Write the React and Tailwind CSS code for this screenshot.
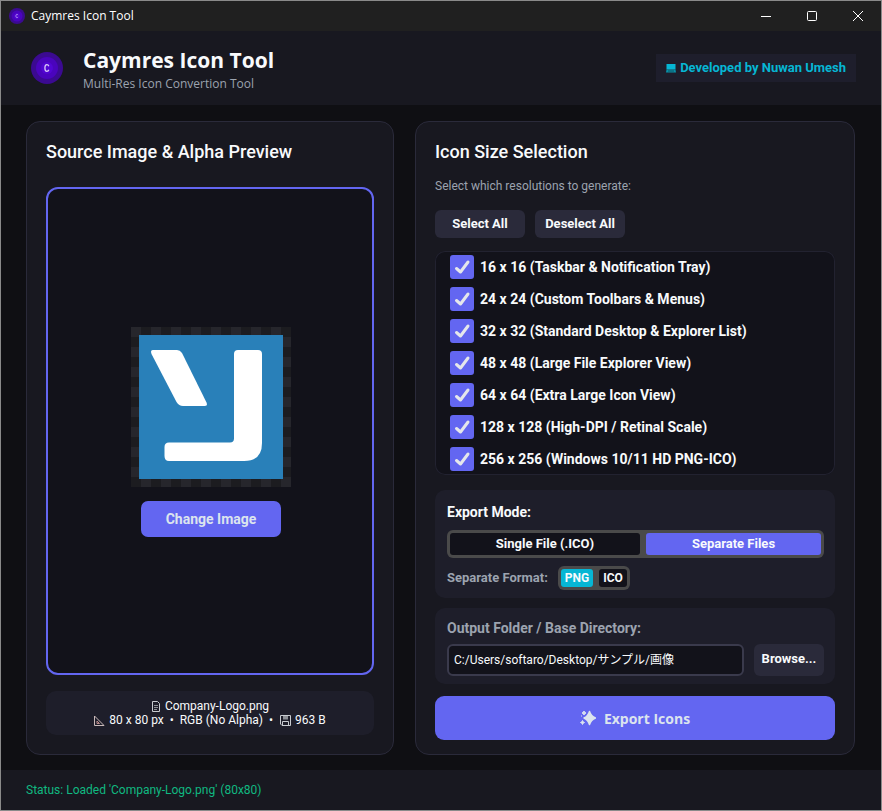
import { useState } from "react";

const SIZES = [
    { px: 16, note: "Taskbar & Notification Tray" },
    { px: 24, note: "Custom Toolbars & Menus" },
    { px: 32, note: "Standard Desktop & Explorer List" },
    { px: 48, note: "Large File Explorer View" },
    { px: 64, note: "Extra Large Icon View" },
    { px: 128, note: "High-DPI / Retinal Scale" },
    { px: 256, note: "Windows 10/11 HD PNG-ICO" },
];

const AppLogo = ({ className }) => (
    <svg viewBox="0 0 32 32" className={className} aria-hidden="true">
        <circle cx="16" cy="16" r="16" fill="#3b0a91" />
        <circle cx="16" cy="16" r="11" fill="#4a04bd" />
        <circle cx="16" cy="16" r="6" fill="#5206d2" />
        <path d="M17.8 14.2c-.3-1-1-1.500-1.900-1.500-1.300 0-2 1-2 3.300s.7 3.300 2 3.300c.9 0 1.600-.5 1.900-1.500" fill="none" stroke="#d9c8f5" strokeWidth="1.300" />
    </svg>
);

const TitleBar = () => (
    <div className="flex h-[30px] items-center bg-[#202020]">
        <AppLogo className="ml-2 h-4 w-4" />
        <span className="ml-[6px] flex-1 font-['Open_Sans',sans-serif] text-[12px] text-white">
            Caymres Icon Tool
        </span>
        <button aria-label="Minimize" className="flex h-full w-[46px] items-center justify-center">
            <svg width="10" height="10" shapeRendering="crispEdges">
                <path d="M0 5.500h10" stroke="#fff" />
            </svg>
        </button>
        <button aria-label="Maximize" className="flex h-full w-[46px] items-center justify-center">
            <svg width="10" height="10">
                <rect x=".5" y=".5" width="9" height="9" rx="1" fill="none" stroke="#fff" />
            </svg>
        </button>
        <button aria-label="Close" className="flex h-full w-[46px] items-center justify-center">
            <svg width="10" height="10">
                <path d="M0 0l10 10M10 0L0 10" stroke="#fff" />
            </svg>
        </button>
    </div>
);

const Header = () => (
    <header className="flex h-[74px] items-center bg-[#181820] pr-[25px] pl-[30px]">
        <AppLogo className="h-8 w-8" />
        <div className="ml-5 flex-1 pt-1 font-['Open_Sans',sans-serif]">
            <h1 className="text-[21px] leading-7 font-bold text-[#f8fafc]">Caymres Icon Tool</h1>
            <p className="text-[12px] leading-5 text-[#9ca3af]">Multi-Res Icon Convertion Tool</p>
        </div>
        <div className="flex h-7 items-center gap-1 bg-[#1e1e2c] px-[10px] text-[13px] font-bold text-[#06b6d4]">
            <svg width="10" height="10" aria-hidden="true">
                <path d="M.5 1h9v5.500h-9z" fill="#06b6d4" />
                <path d="M.5 6.500h9L10 9.500H0z" fill="#0891a8" />
                <path d="M2 8h6" stroke="#0f5564" />
            </svg>
            Developed by Nuwan Umesh
        </div>
    </header>
);

const CompanyLogo = () => (
    <svg viewBox="0 0 144 144" className="h-36 w-36" role="img" aria-label="Company logo">
        <rect width="144" height="144" fill="#2980b9" />
        <path
            d="M14 15H38Q41 15 43 18L67.500 67.500Q69 71 65.500 71H44Q40 71 37.500 67L12.500 19Q11 15 14 15Z"
            fill="#fff"
        />
        <path
            d="M99 15H119Q123 15 123 19V108Q123 126 105 126H30Q25.500 126 25.500 121V112Q25.500 107.500 30 107.500H91Q95 107.500 95 103.500V19Q95 15 99 15Z"
            fill="#fff"
        />
    </svg>
);

const SourcePanel = () => (
    <section className="flex flex-col rounded-[14px] border border-[#2a2a3a] bg-[#181820] px-[19px] pt-[18px] pb-[19px]">
        <h2 className="text-[18px] leading-6 font-medium text-[#f8fafc]">
            Source Image &amp; Alpha Preview
        </h2>
        <div className="mt-[23px] flex flex-1 flex-col items-center justify-center gap-[14px] rounded-xl border-2 border-[#6366f1] bg-[#12121a] pt-[2px] pl-[2px]">
            <div className="bg-[conic-gradient(#1c1c20_25%,#26262c_0_50%,#1c1c20_0_75%,#26262c_0)] bg-[length:20px_20px] p-2">
                <CompanyLogo />
            </div>
            <button className="h-9 w-[140px] rounded-[7px] bg-[#6366f1] text-[14px] font-bold text-[#dce4ee]">
                Change Image
            </button>
        </div>
        {/* File details */}
        <div className="mt-4 flex h-11 flex-col items-center justify-center rounded-[10px] bg-[#1e1e2a] text-[12px] leading-[14px] text-[#f8fafc]">
            <p className="flex items-center gap-1">
                <svg width="10" height="11" fill="none" stroke="#c9ccd1" aria-hidden="true">
                    <path d="M1.500 .5h5l2 2v8h-7z" />
                    <path d="M3 4.500h4M3 6.500h4M3 8.500h3" stroke="#8d9096" />
                </svg>
                Company-Logo.png
            </p>
            <p className="flex items-center gap-1">
                <svg width="11" height="11" fill="none" stroke="#c9b9b9" aria-hidden="true">
                    <path d="M.5 1v9.500h9.500z" />
                    <path d="M3 6v2.500h2.500z" stroke="#b98a8a" />
                </svg>
                <span className="whitespace-pre">80 x 80 px  •  RGB (No Alpha)  • </span>
                <svg width="11" height="11" fill="none" stroke="#c9ccd1" aria-hidden="true">
                    <path d="M.5 .5h10v10H2l-1.500-1.500z" />
                    <path d="M3 1h5v3.500H3z" fill="#8d9096" stroke="none" />
                    <path d="M2.500 10V6.500h6V10" />
                </svg>
                963 B
            </p>
        </div>
    </section>
);

const SizeRow = ({ size, checked, onToggle }) => (
    <label className="flex h-8 items-center gap-[6px] text-[14px] font-bold text-[#f8fafc]">
        <span className="grid h-6 w-6 place-items-center">
            <input
                type="checkbox"
                checked={checked}
                onChange={onToggle}
                className="col-start-1 row-start-1 h-6 w-6 appearance-none rounded-[3px] border-2 border-[#6366f1] checked:bg-[#6366f1]"
            />
            {checked && (
                <svg width="24" height="24" className="pointer-events-none col-start-1 row-start-1">
                    <path d="M6.500 13.500l4 3.500 7.500-10" fill="none" stroke="#e5e7eb" strokeWidth="3" strokeLinecap="round" strokeLinejoin="round" />
                </svg>
            )}
        </span>
        {size.px} x {size.px} ({size.note})
    </label>
);

const ExportPanel = () => {
    const [selected, setSelected] = useState(SIZES.map((s) => s.px));
    const [mode, setMode] = useState("separate");
    const [format, setFormat] = useState("PNG");
    const [folder, setFolder] = useState("C:/Users/softaro/Desktop/サンプル/画像");

    const toggle = (px) => {
        setSelected((prev) => (prev.includes(px) ? prev.filter((p) => p !== px) : [...prev, px]));
    };

    return (
        <section className="flex flex-col rounded-[14px] border border-[#2a2a3a] bg-[#181820] px-[19px] pt-[18px] pb-[14px]">
            <h2 className="text-[18px] leading-6 font-medium text-[#f8fafc]">Icon Size Selection</h2>
            <p className="mt-3 text-[12px] leading-5 text-[#9ca3af]">
                Select which resolutions to generate:
            </p>
            <div className="mt-[14px] flex gap-[10px]">
                <button
                    onClick={() => setSelected(SIZES.map((s) => s.px))}
                    className="h-7 w-[90px] rounded-[6px] bg-[#2a2a3a] text-[13px] font-bold text-[#f8fafc]"
                >
                    Select All
                </button>
                <button
                    onClick={() => setSelected([])}
                    className="h-7 w-[90px] rounded-[6px] bg-[#2a2a3a] text-[13px] font-bold text-[#f8fafc]"
                >
                    Deselect All
                </button>
            </div>

            {/* Resolutions */}
            <div className="mt-[13px] rounded-[10px] bg-[#12121a] pl-[15px] ring-1 ring-[#222230] ring-inset">
                {SIZES.map((size) => (
                    <SizeRow
                        key={size.px}
                        size={size}
                        checked={selected.includes(size.px)}
                        onToggle={() => toggle(size.px)}
                    />
                ))}
            </div>

            {/* Export mode */}
            <div className="mt-[15px] rounded-[10px] bg-[#1e1e2a] pt-3 pr-[11px] pb-2 pl-3">
                <h3 className="text-[14px] leading-5 font-bold text-[#f8fafc]">Export Mode:</h3>
                <div className="mt-2 flex h-7 gap-[6px] rounded-[6px] bg-[#4a4a4a] p-[3px] text-[13px] font-bold text-[#f8fafc]">
                    <button
                        aria-pressed={mode === "single"}
                        onClick={() => setMode("single")}
                        className={`flex-[190] rounded-[3px] ${mode === "single" ? "bg-[#6366f1]" : "bg-[#12121a]"}`}
                    >
                        Single File (.ICO)
                    </button>
                    <button
                        aria-pressed={mode === "separate"}
                        onClick={() => setMode("separate")}
                        className={`flex-[175] rounded-[3px] ${mode === "separate" ? "bg-[#6366f1]" : "bg-[#12121a]"}`}
                    >
                        Separate Files
                    </button>
                </div>
                <div className="mt-2 flex items-center gap-[10px]">
                    <span className="text-[13px] font-bold text-[#9ca3af]">Separate Format:</span>
                    <div className="flex h-6 gap-[6px] rounded-[6px] bg-[#4a4a4a] p-[3px] text-[12px] font-bold text-[#f8fafc]">
                        {["PNG", "ICO"].map((f) => (
                            <button
                                key={f}
                                aria-pressed={format === f}
                                onClick={() => setFormat(f)}
                                className={`rounded-[3px] px-1 ${format === f ? "bg-[#06b6d4]" : "bg-[#12121a]"}`}
                            >
                                {f}
                            </button>
                        ))}
                    </div>
                </div>
            </div>

            {/* Output folder */}
            <div className="mt-[10px] rounded-[10px] bg-[#1e1e2a] pt-[10px] pr-[11px] pb-2 pl-3">
                <label htmlFor="folder" className="block text-[14px] leading-5 font-bold text-[#9ca3af]">
                    Output Folder / Base Directory:
                </label>
                <div className="mt-[6px] flex gap-[10px]">
                    <input
                        id="folder"
                        type="text"
                        value={folder}
                        onChange={(e) => setFolder(e.target.value)}
                        className="h-8 min-w-0 flex-1 rounded-[6px] border-2 border-[#3a3a4c] bg-[#12121a] px-[5px] pb-1 text-[12px] text-[#f8fafc]"
                    />
                    <button className="h-8 w-[70px] rounded-[6px] bg-[#2a2a3a] pb-[2px] text-[13px] font-bold text-[#f8fafc]">
                        Browse...
                    </button>
                </div>
            </div>

            <button className="mt-3 flex h-11 items-center justify-center gap-2 rounded-[9px] bg-[#6366f1] font-['Open_Sans',sans-serif] text-[14px] font-bold text-[#dce4ee]">
                <svg width="16" height="16" fill="#dce4ee" stroke="#dce4ee" strokeLinejoin="round" aria-hidden="true">
                    <path d="M9.500 1.500Q11 6.500 15.500 8Q11 9.500 9.500 14.500Q8 9.500 4 8Q8 6.500 9.500 1.500Z" strokeWidth="1.500" />
                    <path d="M4 1Q4.300 2.700 6 3Q4.300 3.300 4 5Q3.700 3.300 2 3Q3.700 2.700 4 1Z" />
                    <path d="M1.500 5.500v1M2.500 10.500Q2.800 12.200 4.500 12.500Q2.800 12.800 2.500 14.500Q2.200 12.800 .5 12.500Q2.200 12.200 2.500 10.500Z" />
                </svg>
                Export Icons
            </button>
        </section>
    );
};

export default function App() {
    return (
        <div className="flex min-h-screen flex-col border border-[#8a8a8a] bg-[#0f0f13] font-[Roboto,'Noto_Sans_CJK_JP',sans-serif]">
            <TitleBar />
            <Header />
            <main className="grid flex-1 grid-cols-[368fr_440fr] gap-[21px] pt-4 pr-[26px] pb-[15px] pl-[25px]">
                <SourcePanel />
                <ExportPanel />
            </main>
            <footer className="flex h-10 items-center bg-[#181820] px-[25px] text-[12px] text-[#10b981]">
                Status: Loaded 'Company-Logo.png' (80x80)
            </footer>
        </div>
    );
}
